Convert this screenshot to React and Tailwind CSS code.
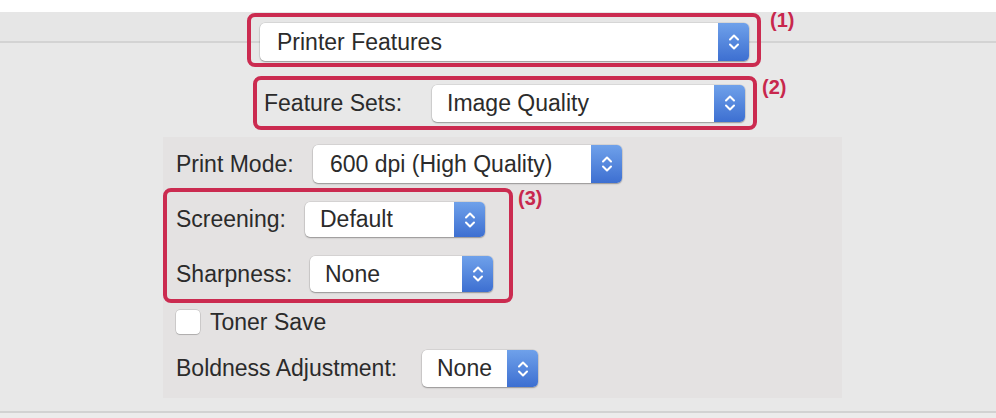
import React from 'react';

const Stepper = () => (
  <div className="flex h-full w-[31px] shrink-0 items-center justify-center rounded-r-[5px] bg-[linear-gradient(to_bottom,#6fa1ea,#3d6fd1)]">
    <svg width="14" height="22" viewBox="0 0 14 22" fill="none" stroke="white" strokeWidth="2" strokeLinecap="round" strokeLinejoin="round">
      <path d="M3 8.5 L7 4.5 L11 8.5" />
      <path d="M3 13.5 L7 17.5 L11 13.5" />
    </svg>
  </div>
);

const Popup = ({ value, className, textPad = 'pl-[15px]' }) => (
  <div className={`flex items-center rounded-[5px] bg-white shadow-[0_1px_1.5px_rgba(0,0,0,0.3),0_0_0_0.5px_rgba(0,0,0,0.12)] ${className}`}>
    <span className={`flex-1 whitespace-nowrap leading-none ${textPad}`}>{value}</span>
    <Stepper />
  </div>
);

const Tag = ({ label, className }) => (
  <span className={`text-[20px] font-bold leading-none text-[#c8274d] ${className}`}>{label}</span>
);

export default function App() {
  return (
    <div
      className="relative h-[418px] w-[996px] overflow-hidden bg-[linear-gradient(to_bottom,#ffffff_0,#ffffff_12px,#e6e6e6_12px,#e6e6e6_41px,#d3d3d3_41px,#d3d3d3_43px,#e8e8e8_43px)] text-[23px] leading-none text-[#2b2b2b]"
      style={{ fontFamily: '"Liberation Sans", Arial, sans-serif' }}
    >
      <div className="pt-[13px]">
        {/* (1) */}
        <div className="ml-[247px] flex items-start">
          <div className="h-[54px] w-[514px] rounded-[8px] border-[4px] border-[#cb2b50] pt-[6px] pl-[9px] pr-[8px]">
            <Popup value="Printer Features" className="h-[38px]" textPad="pl-[17px]" />
          </div>
          <Tag label="(1)" className="ml-[9px] -mt-[3px]" />
        </div>

        {/* (2) */}
        <div className="ml-[253px] mt-[9px] flex items-start">
          <div className="flex h-[54px] w-[504px] items-center rounded-[8px] border-[4px] border-[#cb2b50] pl-[7px] pr-[8px]">
            <span className="w-[168px] whitespace-nowrap">Feature Sets:</span>
            <Popup value="Image Quality" className="h-[37px] flex-1" />
          </div>
          <Tag label="(2)" className="ml-[5px] mt-[1px]" />
        </div>

        {/* panel */}
        <div className="ml-[163px] mt-[7px] h-[261px] w-[679px] bg-[#e4e2e2] pt-[8px]">
          <div className="flex items-center pl-[13px]">
            <span className="w-[137px] whitespace-nowrap">Print Mode:</span>
            <Popup value="600 dpi (High Quality)" className="h-[38px] w-[309px]" textPad="pl-[17px]" />
          </div>

          <div className="mt-[5px] flex items-start">
            <div className="h-[115px] w-[350px] rounded-[8px] border-[4px] border-[#cb2b50] pl-[9px] pt-[10px]">
              <div className="flex items-center">
                <span className="w-[129px] whitespace-nowrap">Screening:</span>
                <Popup value="Default" className="h-[35px] w-[180px]" />
              </div>
              <div className="mt-[19px] flex items-center">
                <span className="w-[134px] whitespace-nowrap">Sharpness:</span>
                <Popup value="None" className="h-[36px] w-[183px]" />
              </div>
            </div>
            <Tag label="(3)" className="ml-[5px] mt-[0px]" />
          </div>

          <div className="mt-[7px] flex h-[24px] items-center pl-[13px]">
            <div className="h-[24px] w-[24px] rounded-[4px] bg-white shadow-[0_0_0_0.5px_rgba(0,0,0,0.2),0_1px_1px_rgba(0,0,0,0.15)]" />
            <span className="ml-[10px]">Toner Save</span>
          </div>

          <div className="mt-[16px] flex items-center pl-[13px]">
            <span className="w-[246px] whitespace-nowrap">Boldness Adjustment:</span>
            <Popup value="None" className="h-[37px] w-[116px]" />
          </div>
        </div>

        <div className="mt-[13px] h-[2px] bg-[#d2d2d2]" />
        <div className="h-[10px] bg-[#ececec]" />
      </div>
    </div>
  );
}
